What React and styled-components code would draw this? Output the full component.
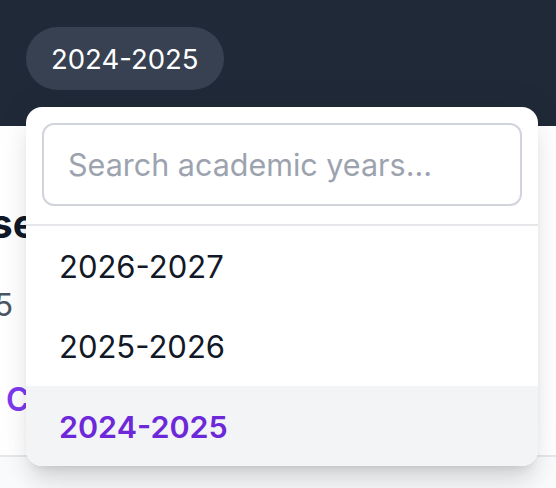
import styled, { createGlobalStyle } from "styled-components";

const years = ["2026-2027", "2025-2026", "2024-2025"];
const selected = "2024-2025";

const App = () => {
  return (
    <Page>
      <GlobalStyle />
      <Header>
        <YearPicker>
          <Pill>{selected}</Pill>
          <Dropdown>
            <SearchBox>
              <SearchInput placeholder="Search academic years..." />
            </SearchBox>
            <List>
              {years.map(year => (
                <Option key={year} $active={year === selected}>
                  {year}
                </Option>
              ))}
            </List>
          </Dropdown>
        </YearPicker>
      </Header>
      <Section>
        <Title>Course Catalog</Title>
        <Meta>Year 2024-2025</Meta>
        <Tab>Courses</Tab>
      </Section>
    </Page>
  );
};

const GlobalStyle = createGlobalStyle`
  body {
    margin: 0;
    background: #f9fafb;
    font-family: "Inter", "Liberation Sans", sans-serif;
  }
  * {
    box-sizing: border-box;
  }
`;

const Page = styled.div`
  width: 556px;
  height: 488px;
  overflow: hidden;
  background: #f9fafb;
`;

const Header = styled.div`
  height: 126px;
  background: #1f2937;
  padding: 27px 26px;
  position: relative;
  z-index: 2;
`;

const YearPicker = styled.div`
  position: relative;
  display: inline-block;
`;

const Pill = styled.button`
  height: 63px;
  padding: 0 25px;
  border: none;
  border-radius: 999px;
  background: #374151;
  color: #ffffff;
  font-family: "Inter", sans-serif;
  font-size: 27.5px;
  font-weight: 400;
`;

const Dropdown = styled.div`
  position: absolute;
  top: 80px;
  left: 0;
  width: 512px;
  background: #ffffff;
  border-radius: 16px;
  overflow: hidden;
  box-shadow: 0 20px 25px -5px rgba(0, 0, 0, 0.12),
    0 8px 10px -6px rgba(0, 0, 0, 0.1), 0 0 40px rgba(0, 0, 0, 0.05);
`;

const SearchBox = styled.div`
  padding: 16px 16px 18px;
  border-bottom: 2px solid #e5e7eb;
`;

const SearchInput = styled.input`
  width: 100%;
  height: 83px;
  border: 2px solid #d1d5db;
  border-radius: 12px;
  padding: 0 24px;
  font-family: "Inter", sans-serif;
  font-size: 30.5px;
  color: #111827;
  outline: none;

  &::placeholder {
    color: #9ca3af;
  }
`;

const List = styled.div`
  display: flex;
  flex-direction: column;
`;

const Option = styled.div`
  height: 80px;
  display: flex;
  align-items: center;
  padding-left: 33px;
  font-size: ${p => (p.$active ? "30.5px" : "31px")};
  font-weight: ${p => (p.$active ? 600 : 400)};
  color: ${p => (p.$active ? "#6d28d9" : "#111827")};
  background: ${p => (p.$active ? "#f3f4f6" : "#ffffff")};
`;

const Section = styled.div`
  height: 331px;
  background: #ffffff;
  border-bottom: 2px solid #e5e7eb;
  padding-top: 74px;
  display: flex;
  flex-direction: column;
`;

const Title = styled.h1`
  margin: 0 0 0 -105px;
  font-size: 40px;
  font-weight: 700;
  line-height: 48px;
  color: #111827;
  white-space: nowrap;
`;

const Meta = styled.div`
  margin: 38px 0 0 -228px;
  font-size: 31px;
  color: #4b5563;
  white-space: nowrap;
`;

const Tab = styled.div`
  margin: 57px 0 0 6px;
  font-size: 32px;
  font-weight: 600;
  color: #7c3aed;
  white-space: nowrap;
`;

export default App;
